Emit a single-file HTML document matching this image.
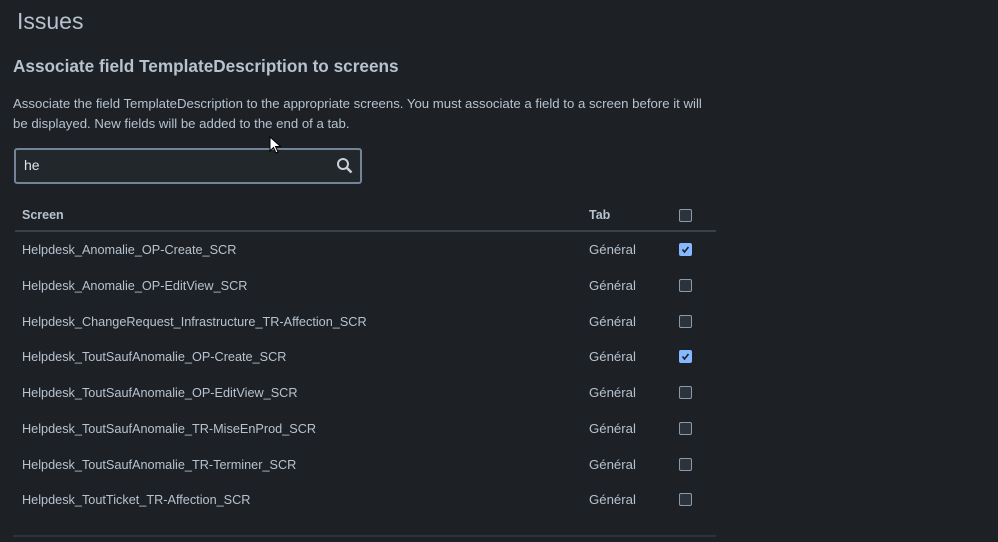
<!DOCTYPE html>
<html><head><style>
body{margin:0;background:#1d2125;width:998px;height:542px;overflow:hidden;font-family:"Liberation Sans",sans-serif;color:#b6c2cf;position:relative}
.a{position:absolute;white-space:nowrap}
h1{position:absolute;left:17px;top:8px;margin:0;font-size:23px;font-weight:normal;color:#b6c2cf}
h2{position:absolute;left:13px;top:56px;margin:0;font-size:17.2px;font-weight:bold;color:#b6c2cf}
.p{left:13px;top:94px;font-size:13.2px;line-height:20px;color:#b6c2cf}
.s{position:absolute;left:14px;top:148px;width:344px;height:32px;border:2px solid #738496;border-radius:3px;background:#22272b}
.cb{position:absolute;left:679px;width:11px;height:11px;border:1px solid #8c9bab;border-radius:2px;background:#2c333a}
.ck{background:#85b8ff;border-color:#85b8ff}
.r{font-size:12.7px;left:22px}
.g{font-size:13.2px;left:589px}
.th{font-size:12.5px;font-weight:bold}
</style></head><body>
<h1>Issues</h1>
<h2>Associate field TemplateDescription to screens</h2>
<div class="a p">Associate the field TemplateDescription to the appropriate screens. You must associate a field to a screen before it will<br>be displayed. New fields will be added to the end of a tab.</div>
<div class="s"><span class="a" style="left:8px;top:7px;font-size:14px;color:#dee4ea">he</span>
<svg class="a" style="left:320px;top:7px" width="18" height="18" viewBox="0 0 18 18"><circle cx="7" cy="7" r="5" fill="none" stroke="#c7d1db" stroke-width="2"/><line x1="10.5" y1="10.5" x2="15.5" y2="15.5" stroke="#c7d1db" stroke-width="2.5"/></svg></div>
<div class="a th" style="left:22px;top:208px">Screen</div>
<div class="a th" style="left:589px;top:208px">Tab</div>
<div class="cb" style="top:209px"></div>
<div class="a" style="left:15px;top:230px;width:701px;height:2px;background:#38414a"></div>
<div class="a r" style="top:243px">Helpdesk_Anomalie_OP-Create_SCR</div><div class="a g" style="top:242px">Général</div>
<div class="cb ck" style="top:243px"><svg width="11" height="11" style="position:absolute;left:0;top:0"><path d="M2.5 5.5l2 2.5 4-5" fill="none" stroke="#1d2125" stroke-width="1.6"/></svg></div>
<div class="a r" style="top:279px">Helpdesk_Anomalie_OP-EditView_SCR</div><div class="a g" style="top:278px">Général</div><div class="cb" style="top:279px"></div>
<div class="a r" style="top:315px">Helpdesk_ChangeRequest_Infrastructure_TR-Affection_SCR</div><div class="a g" style="top:314px">Général</div><div class="cb" style="top:315px"></div>
<div class="a r" style="top:350px">Helpdesk_ToutSaufAnomalie_OP-Create_SCR</div><div class="a g" style="top:349px">Général</div>
<div class="cb ck" style="top:350px"><svg width="11" height="11" style="position:absolute;left:0;top:0"><path d="M2.5 5.5l2 2.5 4-5" fill="none" stroke="#1d2125" stroke-width="1.6"/></svg></div>
<div class="a r" style="top:386px">Helpdesk_ToutSaufAnomalie_OP-EditView_SCR</div><div class="a g" style="top:385px">Général</div><div class="cb" style="top:386px"></div>
<div class="a r" style="top:422px">Helpdesk_ToutSaufAnomalie_TR-MiseEnProd_SCR</div><div class="a g" style="top:421px">Général</div><div class="cb" style="top:422px"></div>
<div class="a r" style="top:458px">Helpdesk_ToutSaufAnomalie_TR-Terminer_SCR</div><div class="a g" style="top:457px">Général</div><div class="cb" style="top:458px"></div>
<div class="a r" style="top:493px">Helpdesk_ToutTicket_TR-Affection_SCR</div><div class="a g" style="top:492px">Général</div><div class="cb" style="top:493px"></div>
<div class="a" style="left:13px;top:535px;width:703px;height:2px;background:#2c333a"></div>
<svg class="a" style="left:269px;top:136px" width="14" height="20"><path d="M1 1v14l3.5-3.5 2.5 5.5 2-1-2.5-5.5h5z" fill="#fff" stroke="#000" stroke-width="1"/></svg>
</body></html>
